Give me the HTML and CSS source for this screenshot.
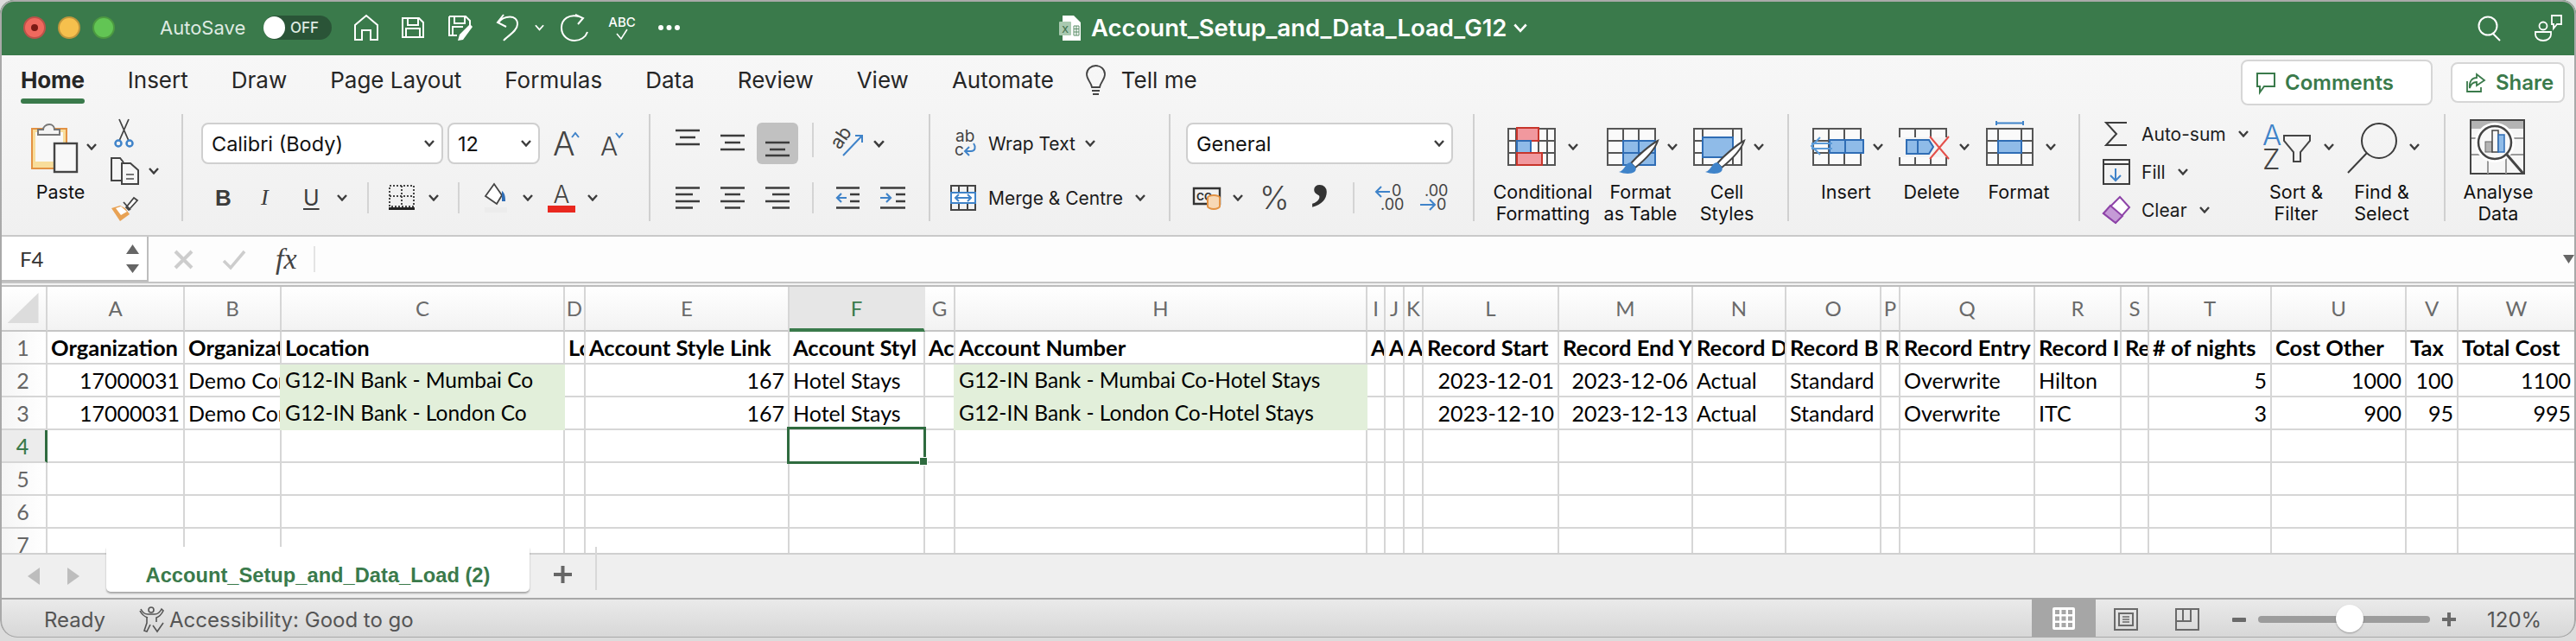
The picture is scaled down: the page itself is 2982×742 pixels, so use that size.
FILE: index.html
```html
<!DOCTYPE html>
<html lang="en">
<head>
<meta charset="utf-8">
<title>Account_Setup_and_Data_Load_G12</title>
<link rel="stylesheet" href="styles.css">
</head>
<body>
<svg class="defs" aria-hidden="true"><symbol id="chev" viewBox="0 0 12 8"><path d="M1 1l5 5.5L11 1" fill="none" stroke="#3c3c3c" stroke-width="2.4"/></symbol><symbol id="chevw" viewBox="0 0 12 8"><path d="M1 1l5 5.5L11 1" fill="none" stroke="#fff" stroke-width="2"/></symbol></svg>
<div class="window">
  <header class="titlebar">
    <span class="light red ml-27"></span><span class="light yellow ml-14"></span><span class="light green ml-14"></span>
    <span class="autosave ml-52">AutoSave</span>
    <span class="toggle ml-21"><span class="knob"></span><span class="off">OFF</span></span>
    <svg class="ml-25" width="30" height="30" viewBox="0 0 30 30"><path d="M2 29V12L15 1l13 11v17h-8V18H10v11z" fill="none" stroke="#fff" stroke-width="2"/></svg>
    <svg class="ml-25" width="28" height="26" viewBox="0 0 28 26"><path d="M2 2h19l5 5v17H2zM8 2v8h12V2M6 24V14h16v10" fill="none" stroke="#fff" stroke-width="2"/></svg>
    <svg class="ml-26" width="30" height="30" viewBox="0 0 30 30"><path d="M2 2h19l5 5v7M2 2v22h9M8 2v8h12V2M6 24V14h12" fill="none" stroke="#fff" stroke-width="2"/><path d="M26 11l3 3-11 15-6 1 2-7z" fill="#fff"/></svg>
    <svg class="ml-26" width="27" height="32" viewBox="0 0 27 32"><path d="M3 10C9 2 25 0 25 12c0 8-12 14-16 19M9 1L2 10l10 5" fill="none" stroke="#fff" stroke-width="2"/></svg>
    <svg class="ml-18" width="11" height="8"><use href="#chevw"/></svg>
    <svg class="ml-19" width="33" height="32" viewBox="0 0 33 32"><path d="M21 3C10 0 1 6 1 16s8 15 15 15c7 0 13-4 15-10M17 1l9 4-6 7" fill="none" stroke="#fff" stroke-width="2"/></svg>
    <svg class="ml-23" width="30" height="28" viewBox="0 0 30 28"><text class="abc" x="15" y="13" text-anchor="middle">ABC</text><path d="M9 21l5 6 7-11" fill="none" stroke="#fff" stroke-width="1.6"/></svg>
    <svg class="ml-26" width="27" height="8" viewBox="0 0 27 8"><circle cx="4" cy="4" r="3" fill="#fff"/><circle cx="13.500" cy="4" r="3" fill="#fff"/><circle cx="23" cy="4" r="3" fill="#fff"/></svg>
    <svg class="ml-438" width="26" height="29" viewBox="0 0 26 29"><path d="M4 0h13l8 8v21H4z" fill="#fff"/><rect y="7" width="14" height="16" rx="1" fill="#a9c9b0"/><text class="xl" x="7" y="20" text-anchor="middle">X</text><path d="M17 12h6v11h-6zM17 15.500h6M17 19h6M20 12v11" fill="none" stroke="#5b8e69" stroke-width="1"/></svg>
    <span class="doc-title ml-11">Account_Setup_and_Data_Load_G12</span>
    <svg class="ml-7" width="16" height="11"><use href="#chevw"/></svg>
    <svg class="push" width="27" height="29" viewBox="0 0 27 29"><circle cx="12" cy="12" r="10.500" fill="none" stroke="#fff" stroke-width="2"/><path d="M18 21l8 8" stroke="#fff" stroke-width="2"/></svg>
    <svg class="ml-39 endpad" width="32" height="32" viewBox="0 0 32 32"><path d="M20 2h11v10h-5l-4 5v-5h-2z" fill="none" stroke="#fff" stroke-width="1.800"/><circle cx="10" cy="14" r="4.500" fill="none" stroke="#fff" stroke-width="1.800"/><path d="M1 21h18v3c0 4-4 7-9 7s-9-3-9-7z" fill="none" stroke="#fff" stroke-width="1.800"/></svg>
  </header>

  <section class="ribbon">
    <nav class="tabs">
      <span class="tab active">Home</span><span class="tab">Insert</span><span class="tab">Draw</span><span class="tab">Page Layout</span><span class="tab">Formulas</span><span class="tab">Data</span><span class="tab">Review</span><span class="tab">View</span><span class="tab">Automate</span>
      <span class="tab tell"><svg width="23" height="38" viewBox="0 0 23 38"><path d="M7 26C6 20 1 17 1 11 1 5 6 1 11.500 1S22 5 22 11c0 6-5 9-6 15z" fill="none" stroke="#444" stroke-width="1.800"/><path d="M7 30h9M8 34h7" stroke="#444" stroke-width="2"/></svg>Tell me</span>
      <button class="btn comments"><svg width="22" height="24" viewBox="0 0 22 24"><path d="M1 1h20v15H9l-5 7v-7H1z" fill="none" stroke="#3a7a4b" stroke-width="2"/></svg>Comments</button>
      <button class="btn share"><svg width="22" height="22" viewBox="0 0 22 22"><path d="M12 1l9 7-9 6v-4C7 10 5 13 4 17 3 10 6 5 12 5zM1 9v12h16v-5" fill="none" stroke="#3a7a4b" stroke-width="1.800"/></svg>Share</button>
    </nav>
    <div class="groups">
      <div class="group g1">
        <div class="big paste-box">
          <div class="big-ic">
            <svg class="ml-12" width="54" height="60" viewBox="0 0 54 60"><rect x="1" y="9" width="40" height="46" fill="#f8dd9b" stroke="#e39243" stroke-width="2"/><rect x="5" y="13" width="32" height="34" fill="#f8f8f8"/><path d="M8 16v-6h6c0-3 3-6 7-6s6 3 6 6h6v6z" fill="#f4f4f4" stroke="#777" stroke-width="2"/><rect x="27" y="26" width="26" height="33" fill="#f8f8f8" stroke="#444" stroke-width="2.400"/></svg>
            <svg class="ml-10" width="12" height="8"><use href="#chev"/></svg>
          </div>
          <span class="lbl">Paste</span>
        </div>
        <div class="clip">
          <svg class="scis" width="32" height="33" viewBox="0 0 32 33"><path d="M10 0l11 25M21 0L10 25" stroke="#444" stroke-width="1.800"/><circle cx="9" cy="28" r="3.500" fill="none" stroke="#3f83c9" stroke-width="2.500"/><circle cx="22" cy="28" r="3.500" fill="none" stroke="#3f83c9" stroke-width="2.500"/></svg>
          <div class="clip-row">
            <svg width="32" height="32" viewBox="0 0 32 32"><path d="M12 27H1V1h10l4 5M13 7h10l9 8v16H13z" fill="#f6f6f6" stroke="#444" stroke-width="2"/><path d="M18 20h9M18 25h9" stroke="#777" stroke-width="1.800"/></svg>
            <svg class="ml-12" width="12" height="8"><use href="#chev"/></svg>
          </div>
          <svg class="brush" width="32" height="30" viewBox="0 0 32 30"><path d="M1 15l10 15 11-8-5-7-6-3z" fill="#e8a254"/><path d="M6 15l6-2 7 6-7 4z" fill="#fff"/><path d="M18 14l9-11 4 3-10 11zM15 8l8 9" fill="#fff" stroke="#444" stroke-width="1.800"/></svg>
        </div>
      </div>

      <div class="group g2">
        <div class="row r1">
          <span class="select font-sel ml-21">Calibri (Body)<svg width="12" height="8"><use href="#chev"/></svg></span>
          <span class="select size-sel ml-5">12<svg width="12" height="8"><use href="#chev"/></svg></span>
          <svg class="ml-15" width="31" height="32" viewBox="0 0 31 32"><text class="bigA" x="0" y="30">A</text><path d="M22 9l4-5 4 5" fill="none" stroke="#3f83c9" stroke-width="2"/></svg>
          <svg class="ml-24" width="27" height="32" viewBox="0 0 27 32"><text class="midA" x="0" y="30">A</text><path d="M18 4l4 5 4-5" fill="none" stroke="#3f83c9" stroke-width="2"/></svg>
        </div>
        <div class="row r2">
          <span class="fmt b ml-37">B</span><span class="fmt i ml-38">I</span><span class="fmt u ml-35">U</span>
          <svg class="ml-22" width="12" height="8"><use href="#chev"/></svg><i class="vsep ml-23"></i>
          <svg class="ml-23" width="30" height="30" viewBox="0 0 30 30"><path d="M1 1h28v24H1zM15 1v24M1 13h28" fill="none" stroke="#444" stroke-width="2" stroke-dasharray="2 2"/><rect y="26" width="30" height="3" fill="#222"/></svg>
          <svg class="ml-16" width="12" height="8"><use href="#chev"/></svg><i class="vsep ml-22"></i>
          <svg class="ml-29" width="26" height="34" viewBox="0 0 26 34"><rect y="28" width="26" height="6" fill="#ececec"/><path d="M1 15L11 1l9 13-6 10z" fill="#fff" stroke="#444" stroke-width="1.800"/><path d="M20 9c3 2 4 6 4 12h-4z" fill="#2f6db5"/></svg>
          <svg class="ml-18" width="12" height="8"><use href="#chev"/></svg>
          <span class="fontcolor ml-17"><span class="fc-a">A</span><i class="fc-bar"></i></span>
          <svg class="ml-14" width="12" height="8"><use href="#chev"/></svg>
        </div>
      </div>

      <div class="group g3">
        <div class="row r1">
          <svg class="ml-29" width="28" height="48" viewBox="0 0 28 48"><path d="M0 9h28M5 17h18M0 25h28" stroke="#3c3c3c" stroke-width="2.600"/></svg>
          <svg class="ml-24" width="28" height="48" viewBox="0 0 28 48"><path d="M0 15h28M5 23h18M0 31h28" stroke="#3c3c3c" stroke-width="2.600"/></svg>
          <span class="selected ml-14"><svg width="28" height="48" viewBox="0 0 28 48"><path d="M0 23h28M5 31h18M0 38h28" stroke="#3c3c3c" stroke-width="2.600"/></svg></span>
          <i class="vsep short ml-16"></i>
          <svg class="ml-24" width="34" height="32" viewBox="0 0 34 32"><text class="orient" x="0" y="0" transform="translate(6 24) rotate(-55)">ab</text><path d="M10 30L32 7M24 7h8v8" fill="none" stroke="#3f83c9" stroke-width="2"/></svg>
          <svg class="ml-11" width="13" height="9"><use href="#chev"/></svg>
        </div>
        <div class="row r2">
          <svg class="ml-29" width="28" height="26" viewBox="0 0 28 26"><path d="M0 1.500h28M0 9h20M0 17h28M0 24.500h20" stroke="#3c3c3c" stroke-width="2.600"/></svg>
          <svg class="ml-24" width="28" height="26" viewBox="0 0 28 26"><path d="M0 1.500h28M5 9h18M0 17h28M5 24.500h18" stroke="#3c3c3c" stroke-width="2.600"/></svg>
          <svg class="ml-24" width="28" height="26" viewBox="0 0 28 26"><path d="M0 1.500h28M8 9h20M0 17h28M8 24.500h20" stroke="#3c3c3c" stroke-width="2.600"/></svg>
          <i class="vsep ml-26"></i>
          <svg class="ml-26" width="27" height="26" viewBox="0 0 27 26"><path d="M0 1.500h27M16 9h11M16 17h11M0 24.500h27" stroke="#3c3c3c" stroke-width="2.600"/><path d="M12 13H1M6 8l-5 5 5 5" fill="none" stroke="#3f83c9" stroke-width="2.200"/></svg>
          <svg class="ml-24" width="29" height="26" viewBox="0 0 29 26"><path d="M0 1.500h29M18 9h11M18 17h11M0 24.500h29" stroke="#3c3c3c" stroke-width="2.600"/><path d="M0 13h11M7 8l5 5-5 5" fill="none" stroke="#3f83c9" stroke-width="2.200"/></svg>
        </div>
      </div>

      <div class="group g4">
        <div class="row r1">
          <svg class="ml-28" width="28" height="32" viewBox="0 0 28 32"><text class="abc2" x="1" y="14">ab</text><text class="abc2" x="0" y="30">c</text><path d="M22 16c3 4 2 9-3 9h-7M17 20l-5 5 5 5" fill="none" stroke="#3f83c9" stroke-width="2"/></svg>
          <span class="txt wrap ml-11">Wrap Text</span><svg class="ml-11" width="12" height="8"><use href="#chev"/></svg>
        </div>
        <div class="row r2">
          <svg class="ml-23" width="30" height="30" viewBox="0 0 30 30"><path d="M1 1h28v28H1zM1 9h28M1 21h28M10 1v8M20 1v8M10 21v8M20 21v8" fill="none" stroke="#444" stroke-width="2"/><rect x="1" y="9" width="28" height="12" fill="#fff" stroke="#3f83c9" stroke-width="2"/><path d="M6 15h18M10 11l-4 4 4 4M20 11l4 4-4 4" fill="none" stroke="#3f83c9" stroke-width="2"/></svg>
          <span class="txt merge ml-14">Merge &amp; Centre</span><svg class="ml-12" width="12" height="8"><use href="#chev"/></svg>
        </div>
      </div>

      <div class="group g5">
        <div class="row r1"><span class="select general-sel ml-18">General<svg width="12" height="8"><use href="#chev"/></svg></span></div>
        <div class="row r2">
          <svg class="ml-26" width="32" height="26" viewBox="0 0 32 26"><path d="M1 2h30v18H1z" fill="none" stroke="#333" stroke-width="2.400"/><text class="acct" x="4" y="16">CC</text><ellipse cx="24" cy="13" rx="7" ry="3" fill="#f7d8b5" stroke="#e39243" stroke-width="2"/><path d="M17 13v10c0 1 3 3 7 3s7-2 7-3V13" fill="#f7d8b5" stroke="#e39243" stroke-width="2"/></svg>
          <svg class="ml-14" width="12" height="8"><use href="#chev"/></svg>
          <span class="pct ml-19">%</span><span class="comma ml-30">,</span><i class="vsep ml-32"></i>
          <svg class="ml-23" width="31" height="30" viewBox="0 0 31 30"><text class="dec" x="20" y="13">0</text><text class="dec" x="7" y="29">.00</text><path d="M18 8H2M8 2L2 8l6 6" fill="none" stroke="#3f83c9" stroke-width="2"/></svg>
          <svg class="ml-21" width="30" height="30" viewBox="0 0 30 30"><text class="dec" x="6" y="13">.00</text><text class="dec" x="20" y="29">0</text><path d="M1 23h16M12 17l6 6-6 6" fill="none" stroke="#3f83c9" stroke-width="2"/></svg>
        </div>
      </div>

      <div class="group g6">
        <div class="big w122">
          <div class="big-ic">
            <svg class="ml-20" width="56" height="64" viewBox="0 0 56 64"><path d="M1 11h54v42H1zM1 25h54M1 39h54M10 11v42M36 11v42M46 11v42" fill="#fafafa" stroke="#555" stroke-width="2"/><rect x="11" y="10" width="25" height="15" fill="#f1989e" stroke="#c8352b" stroke-width="2"/><rect x="11" y="25" width="16" height="14" fill="#8fbbe8" stroke="#2f6db5" stroke-width="2"/><rect x="11" y="39" width="29" height="14" fill="#f1989e" stroke="#c8352b" stroke-width="2"/></svg>
            <svg class="ml-14" width="12" height="8"><use href="#chev"/></svg>
          </div>
          <span class="lbl">Conditional<br>Formatting</span>
        </div>
        <div class="big w104">
          <div class="big-ic">
            <svg class="ml-13" width="60" height="64" viewBox="0 0 60 64"><path d="M1 11h55v42H1zM1 25h55M1 39h55M19 11v42M37 11v42" fill="#fafafa" stroke="#555" stroke-width="2"/><rect x="19" y="25" width="37" height="28" fill="#8fbbe8" stroke="#2f6db5" stroke-width="2"/><path d="M19 39h37M37 25v28" stroke="#2f6db5" stroke-width="2"/><path d="M59 25c-8 4-23 17-31 26l5 5c10-8 22-19 26-31z" fill="#fff" stroke="#444" stroke-width="2"/><path d="M28 50c-7 0-7 10-14 11 10 4 23 2 19-6z" fill="#3f83c9"/></svg>
            <svg class="ml-10" width="12" height="8"><use href="#chev"/></svg>
          </div>
          <span class="lbl">Format<br>as Table</span>
        </div>
        <div class="big w96">
          <div class="big-ic">
            <svg class="ml-9" width="60" height="64" viewBox="0 0 60 64"><path d="M1 11h55v42H1zM1 25h10M1 39h10M11 11v42M46 11v42M11 53h35" fill="#fafafa" stroke="#555" stroke-width="2"/><rect x="11" y="21" width="35" height="23" fill="#8fbbe8" stroke="#2f6db5" stroke-width="2"/><path d="M59 25c-8 4-23 17-31 26l5 5c10-8 22-19 26-31z" fill="#fff" stroke="#444" stroke-width="2"/><path d="M28 50c-7 0-7 10-14 11 10 4 23 2 19-6z" fill="#3f83c9"/></svg>
            <svg class="ml-10" width="12" height="8"><use href="#chev"/></svg>
          </div>
          <span class="lbl">Cell<br>Styles</span>
        </div>
      </div>

      <div class="group g7">
        <div class="big w108">
          <div class="big-ic">
            <svg class="ml-11" width="64" height="64" viewBox="0 0 64 64"><path d="M5 11h55v42H5zM5 25h55M5 39h55M23 11v42M41 11v42" fill="#fafafa" stroke="#555" stroke-width="2"/><rect x="24" y="24" width="39" height="15" fill="#8fbbe8" stroke="#2f6db5" stroke-width="2"/><path d="M42 24v15" stroke="#2f6db5" stroke-width="2"/><path d="M13 21L3 31l10 10M3 28h24M3 34h24" fill="none" stroke="#5b9bd8" stroke-width="2"/></svg>
            <svg class="ml-10" width="12" height="8"><use href="#chev"/></svg>
          </div>
          <span class="lbl">Insert</span>
        </div>
        <div class="big w90">
          <div class="big-ic">
            <svg class="ml-7" width="59" height="64" viewBox="0 0 59 64"><path d="M1 21V11h54v10M1 44v9h54v-9M19 11v10M37 11v10M19 44v9M37 44v9M1 31" fill="#fafafa" stroke="#555" stroke-width="2"/><path d="M9 24h26l5 8-5 8H9z" fill="#8fbbe8" stroke="#2f6db5" stroke-width="2"/><path d="M22 24v16" stroke="#2f6db5" stroke-width="2"/><path d="M36 20l22 26M58 20L36 46" stroke="#e4504a" stroke-width="2"/></svg>
            <svg class="ml-11" width="12" height="8"><use href="#chev"/></svg>
          </div>
          <span class="lbl">Delete</span>
        </div>
        <div class="big w112">
          <div class="big-ic">
            <svg class="ml-18" width="55" height="64" viewBox="0 0 55 64"><path d="M12 2v5M43 2v5M12 4.500h31" fill="none" stroke="#3f83c9" stroke-width="2"/><path d="M1 11h53v42H1zM1 25h53M1 39h53M14 11v42M41 11v42" fill="#fafafa" stroke="#555" stroke-width="2"/><rect x="14" y="25" width="27" height="14" fill="#8fbbe8" stroke="#2f6db5" stroke-width="2"/></svg>
            <svg class="ml-14" width="12" height="8"><use href="#chev"/></svg>
          </div>
          <span class="lbl">Format</span>
        </div>
      </div>

      <div class="group g8">
        <div class="stack">
          <div class="stack-row"><svg width="32" height="30" viewBox="0 0 32 30"><path d="M28 2H4l12 13L4 28h24" fill="none" stroke="#3c3c3c" stroke-width="2"/></svg><span class="txt ml-13">Auto-sum</span><svg class="ml-14" width="12" height="8"><use href="#chev"/></svg></div>
          <div class="stack-row"><svg width="32" height="30" viewBox="0 0 32 30"><path d="M1 1h30v28H1zM1 6h30" fill="none" stroke="#3c3c3c" stroke-width="2"/><path d="M15 11v14M9 19l6 6 6-6" fill="none" stroke="#3f83c9" stroke-width="2"/></svg><span class="txt ml-13">Fill</span><svg class="ml-14" width="12" height="8"><use href="#chev"/></svg></div>
          <div class="stack-row"><svg width="32" height="32" viewBox="0 0 32 32"><path d="M20 1l11 12-16 18L1 20z" fill="#fff" stroke="#8e44a8" stroke-width="2"/><path d="M9 11l14 12-8 8L1 20z" fill="#c59ad6" stroke="#8e44a8" stroke-width="2"/></svg><span class="txt ml-13">Clear</span><svg class="ml-14" width="12" height="8"><use href="#chev"/></svg></div>
        </div>
        <div class="big w96">
          <div class="big-ic">
            <svg class="ml-9" width="56" height="64" viewBox="0 0 56 64"><text class="sortA" x="0" y="30">A</text><text class="sortZ" x="0" y="58">Z</text><path d="M25 19h30v6L44 38v11h-8V38L25 25z" fill="none" stroke="#444" stroke-width="2"/></svg>
            <svg class="ml-15" width="12" height="8"><use href="#chev"/></svg>
          </div>
          <span class="lbl">Sort &amp;<br>Filter</span>
        </div>
        <div class="big w102">
          <div class="big-ic">
            <svg class="ml-11" width="58" height="64" viewBox="0 0 58 64"><circle cx="37" cy="25" r="20" fill="none" stroke="#3c3c3c" stroke-width="2"/><path d="M23 39L1 62" stroke="#3c3c3c" stroke-width="2"/></svg>
            <svg class="ml-14" width="12" height="8"><use href="#chev"/></svg>
          </div>
          <span class="lbl">Find &amp;<br>Select</span>
        </div>
      </div>

      <div class="group g9">
        <div class="big w122">
          <div class="big-ic">
            <svg class="ml-28" width="64" height="64" viewBox="0 0 64 64"><rect x="1" y="1" width="62" height="62" fill="#f6f6f6" stroke="#444" stroke-width="2"/><rect x="2" y="2" width="60" height="9" fill="#b4b4b4"/><path d="M2 22h60M2 41h60M21 41v22M42 41v22" stroke="#999" stroke-width="2"/><circle cx="29" cy="27" r="20" fill="#f8f8f8" stroke="#fff" stroke-width="6"/><circle cx="29" cy="27" r="19" fill="#f8f8f8" stroke="#444" stroke-width="2.500"/><rect x="18" y="26" width="8" height="12" fill="#b4b4b4" stroke="#666"/><rect x="26" y="13" width="7" height="25" fill="#f8f8f8" stroke="#444" stroke-width="1.500"/><rect x="33" y="18" width="7" height="20" fill="#8fbbe8" stroke="#2f6db5" stroke-width="1.500"/><path d="M43 41l19 22" stroke="#444" stroke-width="3"/></svg>
          </div>
          <span class="lbl">Analyse<br>Data</span>
        </div>
      </div>
    </div>
  </section>

  <div class="formula">
    <div class="namebox"><span>F4</span><svg width="15" height="33" viewBox="0 0 15 33"><path d="M7.500 0L15 11H0zM0 23h15L7.500 33z" fill="#666"/></svg></div>
    <svg class="ml-29" width="23" height="21" viewBox="0 0 23 21"><path d="M2 1l19 19M21 1L2 20" stroke="#cdcdcd" stroke-width="4"/></svg>
    <svg class="ml-34" width="26" height="21" viewBox="0 0 26 21"><path d="M1 12l8 8L25 1" fill="none" stroke="#cdcdcd" stroke-width="3.500"/></svg>
    <span class="fx ml-35">fx</span>
    <i class="fsep ml-14"></i>
    <svg class="push farrow" width="13" height="10" viewBox="0 0 13 10"><path d="M0 0h13L6.500 10z" fill="#666"/></svg>
  </div>

  <div class="sheet">
    <div class="sheet-row head">
      <div class="corner"><i></i></div><div>A</div><div>B</div><div>C</div><div>D</div><div>E</div><div class="cur">F</div><div>G</div><div>H</div><div>I</div><div>J</div><div>K</div><div>L</div><div>M</div><div>N</div><div>O</div><div>P</div><div>Q</div><div>R</div><div>S</div><div>T</div><div>U</div><div>V</div><div>W</div>
    </div>
    <div class="sheet-row bold">
      <div class="rh">1</div><div>Organization</div><div>Organizat</div><div>Location</div><div>Lo</div><div>Account Style Link</div><div>Account Styl</div><div>Ac</div><div>Account Number</div><div>A</div><div>A</div><div>A</div><div>Record Start</div><div>Record End Y</div><div>Record D</div><div>Record B</div><div>R</div><div>Record Entry</div><div>Record I</div><div>Re</div><div># of nights</div><div>Cost Other</div><div>Tax</div><div>Total Cost</div>
    </div>
    <div class="sheet-row">
      <div class="rh">2</div><div class="n">17000031</div><div>Demo Cor</div><div class="fill top">G12-IN Bank - Mumbai Co</div><div></div><div class="n">167</div><div>Hotel Stays</div><div></div><div class="fill top">G12-IN Bank - Mumbai Co-Hotel Stays</div><div></div><div></div><div></div><div class="n">2023-12-01</div><div class="n">2023-12-06</div><div>Actual</div><div>Standard</div><div></div><div>Overwrite</div><div>Hilton</div><div></div><div class="n">5</div><div class="n">1000</div><div class="n">100</div><div class="n">1100</div>
    </div>
    <div class="sheet-row">
      <div class="rh">3</div><div class="n">17000031</div><div>Demo Cor</div><div class="fill">G12-IN Bank - London Co</div><div></div><div class="n">167</div><div>Hotel Stays</div><div></div><div class="fill">G12-IN Bank - London Co-Hotel Stays</div><div></div><div></div><div></div><div class="n">2023-12-10</div><div class="n">2023-12-13</div><div>Actual</div><div>Standard</div><div></div><div>Overwrite</div><div>ITC</div><div></div><div class="n">3</div><div class="n">900</div><div class="n">95</div><div class="n">995</div>
    </div>
    <div class="sheet-row">
      <div class="rh cur-row">4</div><div></div><div></div><div></div><div></div><div></div><div class="sel"></div><div></div><div></div><div></div><div></div><div></div><div></div><div></div><div></div><div></div><div></div><div></div><div></div><div></div><div></div><div></div><div></div><div></div>
    </div>
    <div class="sheet-row">
      <div class="rh">5</div><div></div><div></div><div></div><div></div><div></div><div></div><div></div><div></div><div></div><div></div><div></div><div></div><div></div><div></div><div></div><div></div><div></div><div></div><div></div><div></div><div></div><div></div><div></div>
    </div>
    <div class="sheet-row">
      <div class="rh">6</div><div></div><div></div><div></div><div></div><div></div><div></div><div></div><div></div><div></div><div></div><div></div><div></div><div></div><div></div><div></div><div></div><div></div><div></div><div></div><div></div><div></div><div></div><div></div>
    </div>
    <div class="sheet-row">
      <div class="rh">7</div><div></div><div></div><div></div><div></div><div></div><div></div><div></div><div></div><div></div><div></div><div></div><div></div><div></div><div></div><div></div><div></div><div></div><div></div><div></div><div></div><div></div><div></div><div></div>
    </div>
  </div>

  <div class="tabstrip">
    <svg class="ml-32 nav" width="14" height="20" viewBox="0 0 14 20"><path d="M14 0v20L0 10z" fill="#bdbdbd"/></svg>
    <svg class="ml-32 nav" width="14" height="20" viewBox="0 0 14 20"><path d="M0 0v20l14-10z" fill="#bdbdbd"/></svg>
    <div class="sheet-tab ml-31">Account_Setup_and_Data_Load (2)</div>
    <svg class="ml-28 plus" width="21" height="20" viewBox="0 0 21 20"><path d="M8.500 0h4v8H21v4h-8.500v8h-4v-8H0V8h8.500z" fill="#666"/></svg>
    <i class="tsep ml-27"></i>
  </div>

  <footer class="status">
    <span class="st ready ml-51">Ready</span>
    <svg class="ml-40" width="31" height="30" viewBox="0 0 31 30"><circle cx="15" cy="4" r="3" fill="none" stroke="#555" stroke-width="1.600"/><path d="M3 3c2 4 5 6 8 6h8c3 0 6-2 8-6l2 2c-2 4-5 7-8 8v5M11 13C8 12 4 9 2 5M10 13v6l-3 9 3 1 4-8" fill="none" stroke="#555" stroke-width="1.600"/><path d="M17 22l5 7 7-10" fill="none" stroke="#555" stroke-width="1.600"/></svg>
    <span class="st ml-5">Accessibility: Good to go</span>
    <span class="viewbtn"><svg width="26" height="26" viewBox="0 0 26 26"><rect width="26" height="26" rx="2" fill="#fff"/><path d="M3 3h5v5H3zM10.500 3h5v5h-5zM18 3h5v5h-5zM3 10.500h5v5H3zM10.500 10.500h5v5h-5zM18 10.500h5v5h-5zM3 18h5v5H3zM10.500 18h5v5h-5zM18 18h5v5h-5z" fill="#a6a6a6"/></svg></span>
    <svg class="ml-21" width="28" height="26" viewBox="0 0 28 26"><path d="M1 1h26v24H1zM6 6h16v14H6z" fill="none" stroke="#6a6a6a" stroke-width="2"/><path d="M10 10h8M10 13h8M10 16h8" stroke="#6a6a6a" stroke-width="1.600"/></svg>
    <svg class="ml-43" width="28" height="26" viewBox="0 0 28 26"><path d="M1 1h26v24H1zM1 15h17V1M9 1v14" fill="none" stroke="#6a6a6a" stroke-width="2"/></svg>
    <i class="minus ml-38"></i>
    <span class="slider ml-14"><i class="thumb"></i></span>
    <svg class="ml-14" width="16" height="16" viewBox="0 0 16 16"><path d="M6 0h4v6h6v4h-6v6H6v-6H0V6h6z" fill="#6a6a6a"/></svg>
    <span class="st zoomval ml-36">120%</span>
  </footer>
</div>
</body>
</html>
```
FILE: styles.css
```css
* { box-sizing: border-box; }
html, body { margin: 0; padding: 0; }
body { width: 2982px; height: 742px; overflow: hidden; background: #dcdcdc; font-family: Inter, "Liberation Sans", sans-serif; }
.defs { display: none; }
svg { display: block; flex: none; overflow: visible; }
i { display: block; font-style: normal; }

.ml-5 { margin-left: 5px; } .ml-7 { margin-left: 7px; } .ml-9 { margin-left: 9px; } .ml-10 { margin-left: 10px; }
.ml-11 { margin-left: 11px; } .ml-12 { margin-left: 12px; } .ml-13 { margin-left: 13px; } .ml-14 { margin-left: 14px; }
.ml-15 { margin-left: 15px; } .ml-16 { margin-left: 16px; } .ml-17 { margin-left: 17px; } .ml-18 { margin-left: 18px; }
.ml-19 { margin-left: 19px; } .ml-20 { margin-left: 20px; } .ml-21 { margin-left: 21px; } .ml-22 { margin-left: 22px; }
.ml-23 { margin-left: 23px; } .ml-24 { margin-left: 24px; } .ml-25 { margin-left: 25px; } .ml-26 { margin-left: 26px; }
.ml-27 { margin-left: 27px; } .ml-28 { margin-left: 28px; } .ml-29 { margin-left: 29px; } .ml-30 { margin-left: 30px; }
.ml-31 { margin-left: 31px; } .ml-32 { margin-left: 32px; } .ml-34 { margin-left: 34px; } .ml-35 { margin-left: 35px; }
.ml-36 { margin-left: 36px; } .ml-37 { margin-left: 37px; } .ml-38 { margin-left: 38px; } .ml-39 { margin-left: 39px; }
.ml-40 { margin-left: 40px; } .ml-43 { margin-left: 43px; } .ml-51 { margin-left: 51px; } .ml-52 { margin-left: 52px; }
.ml-438 { margin-left: 438px; }
.push { margin-left: auto; }

.window { position: relative; width: 2982px; height: 738px; display: flex; flex-direction: column; overflow: hidden; border-radius: 16px 16px 20px 20px; background: #f2f2f2; }
.window::after { content: ""; position: absolute; inset: 0; border: 2px solid #a9a9a9; border-bottom-width: 1px; border-radius: 16px 16px 20px 20px; pointer-events: none; z-index: 5; }

/* title bar */
.titlebar { height: 64px; flex: none; display: flex; align-items: center; background: #3a7a4b; color: #fff; }
.light { width: 26px; height: 26px; border-radius: 50%; flex: none; border: 2px solid rgba(0,0,0,.22); }
.light.red { background: #f0695e; position: relative; }
.light.red::after { content: ""; position: absolute; left: 7px; top: 7px; width: 8px; height: 8px; border-radius: 50%; background: #7c1a14; }
.light.yellow { background: #f6c04d; }
.light.green { background: #62c554; }
.autosave { width: 99px; font-size: 22px; color: #dfeae2; white-space: nowrap; }
.toggle { width: 79px; height: 28px; border-radius: 14px; background: #2a5437; display: flex; align-items: center; flex: none; }
.knob { width: 25px; height: 26px; border-radius: 50%; background: #fff; flex: none; }
.off { margin-left: 6px; font-size: 17px; font-weight: 500; color: #dfeae2; }
.abc { font: 500 15px Inter, sans-serif; fill: #fff; }
.xl { font: 500 11px Inter, sans-serif; fill: #44734f; }
.doc-title { width: 482px; font-size: 27.500px; font-weight: 600; white-space: nowrap; }
.endpad { margin-right: 16px; }

/* ribbon */
.ribbon { height: 210px; flex: none; border-bottom: 2px solid #c9c9c9; background: linear-gradient(#f7f7f7, #f0f0f0); }
.tabs { height: 68px; display: flex; padding-left: 24px; gap: 50px; color: #262626; font-size: 26px; }
.tab { display: block; padding-top: 14px; line-height: 30px; white-space: nowrap; }
.tab.active { font-weight: 700; letter-spacing: -.2px; }
.tab.active::after { content: ""; display: block; height: 6px; margin-top: 6px; border-radius: 3px; background: #3a7a4b; }
.tab.tell { display: flex; align-items: flex-start; gap: 18px; margin-left: -13px; }
.tab.tell svg { margin-top: -3px; }
.btn { display: flex; align-items: center; font: 600 24px Inter, sans-serif; color: #3a7a4b; background: #fff; border: 2px solid #d6d6d6; border-radius: 8px; padding: 0; }
.comments { width: 222px; height: 53px; margin: 5px 0 0 auto; padding-left: 16px; gap: 11px; }
.share { width: 132px; height: 47px; margin: 8px 13px 0 -29px; padding-left: 16px; gap: 12px; }

.groups { height: 124px; display: flex; }
.group { height: 124px; flex: none; border-right: 2px solid #d0d0d0; }
.g1 { width: 212px; display: flex; }
.g2 { width: 541px; } .g3 { width: 324px; } .g4 { width: 278px; } .g5 { width: 352px; }
.g6 { width: 364px; display: flex; padding-left: 18px; }
.g7 { width: 337px; display: flex; padding-left: 12px; }
.g8 { width: 423px; display: flex; padding-left: 26px; }
.g9 { flex: 1; border-right: 0; }

.row { display: flex; align-items: center; }
.r1 { height: 48px; margin-top: 10px; }
.r2 { height: 40px; margin-top: 19px; }
.select { display: flex; align-items: center; justify-content: space-between; height: 48px; flex: none; background: #fff; border: 2px solid #cfcfcf; border-radius: 8px; padding: 0 8px 0 10px; font-size: 23.500px; color: #111; white-space: nowrap; }
.font-sel { width: 280px; } .size-sel { width: 107px; } .general-sel { width: 309px; }
.bigA { font: 300 38px Inter, sans-serif; fill: #444; }
.midA { font: 300 30px Inter, sans-serif; fill: #444; }
.fmt { display: block; flex: none; color: #3c3c3c; line-height: 30px; }
.b { width: 15px; font: 700 26px "Liberation Sans", sans-serif; }
.i { width: 14px; font: italic 400 26px "Liberation Serif", serif; }
.u { width: 17px; font: 400 25px Inter, sans-serif; text-decoration: underline; text-underline-offset: 3px; text-decoration-thickness: 2px; }
.vsep { width: 2px; height: 36px; flex: none; background: #d4d4d4; }
.vsep.short { height: 40px; margin-top: -8px; }
.fontcolor { width: 32px; flex: none; display: flex; flex-direction: column; align-items: center; }
.fc-a { font: 300 28px/24px Inter, sans-serif; color: #444; }
.fc-bar { width: 32px; height: 8px; margin-top: 1px; background: #e9281f; }
.selected { display: block; width: 48px; height: 48px; flex: none; padding-left: 10px; border-radius: 6px; background: #c1c1c1; }
.orient { font: 400 22px Inter, sans-serif; fill: #444; }
.abc2 { font: 400 19px Inter, sans-serif; fill: #444; }
.txt { font-size: 21px; color: #1c1c1c; white-space: nowrap; }
.wrap { width: 101px; } .merge { width: 158px; }
.acct { font: 700 12px Inter, sans-serif; fill: #333; }
.pct { width: 30px; flex: none; font: 300 37px/40px Inter, sans-serif; color: #444; }
.comma { width: 16px; flex: none; font: 700 84px/40px "Liberation Serif", serif; color: #333; position: relative; top: -31px; }
.dec { font: 400 18px Inter, sans-serif; fill: #444; }

.big { flex: none; display: flex; flex-direction: column; align-items: center; }
.big-ic { width: 100%; height: 64px; margin-top: 6px; display: flex; align-items: center; }
.lbl { margin-top: 8px; font-size: 21.500px; line-height: 25px; text-align: center; color: #111; white-space: nowrap; }
.paste-box { width: 92px; margin-left: 24px; }
.w122 { width: 122px; } .w104 { width: 104px; } .w96 { width: 96px; } .w108 { width: 108px; } .w90 { width: 90px; } .w112 { width: 112px; } .w102 { width: 102px; }
.clip { margin-left: 12px; padding-top: 6px; }
.clip-row { display: flex; align-items: center; margin-top: 11px; }
.brush { margin-top: 12px; }
.stack { width: 176px; flex: none; padding-top: 1px; }
.stack-row { height: 44px; display: flex; align-items: center; }
.sortA { font: 300 33px Inter, sans-serif; fill: #3f83c9; }
.sortZ { font: 300 33px Inter, sans-serif; fill: #444; }

/* formula bar */
.formula { height: 54px; flex: none; display: flex; align-items: center; background: #fdfdfd; border-bottom: 2px solid #c4c4c4; }
.namebox { width: 172px; height: 52px; flex: none; display: flex; align-items: center; justify-content: space-between; padding: 0 9px 0 23px; background: #fff; border: 2px solid #bdbdbd; border-left: 0; border-top: 0; font: 400 24px Lato, sans-serif; color: #333; }
.fx { font: italic 400 34px/40px "Liberation Serif", serif; color: #444; width: 30px; }
.fsep { width: 2px; height: 30px; background: #e4e4e4; }
.farrow { margin-right: 2px; }

/* sheet */
.sheet { height: 310px; flex: none; overflow: hidden; background: #fff; border-top: 2px solid #bdbdbd; margin-top: 2px; }
.sheet-row { display: grid; height: 38px; grid-template-columns: 55px 159px 112px 328px 24px 236px 157px 35px 477px 21px 22px 22px 157px 155px 108px 110px 22px 156px 100px 32px 142px 156px 60px 136px; font: 400 25px/36px Lato, sans-serif; color: #000; }
.sheet-row > div { position: relative; overflow: hidden; white-space: nowrap; padding: 0 0 0 4px; border-right: 2px solid #d6d6d6; border-bottom: 2px solid #d6d6d6; }
.sheet-row.bold { font-weight: 700; font-size: 25.500px; }
.sheet-row .n { text-align: right; padding: 0 4px 0 0; }
.sheet-row > .fill { background: #e2efda; border-right-color: #e2efda; border-bottom-color: #e2efda; margin-left: -2px; padding-left: 6px; font-size: 24.500px; }
.sheet-row > .rh { padding: 0; text-align: center; color: #666; background: linear-gradient(90deg, #f5f5f5, #fff); font-size: 25px; font-weight: 400; }
.sheet-row.head { height: 52px; line-height: 50px; color: #6a6a6a; font-size: 24px; background: linear-gradient(#fff, #f2f2f2); }
.sheet-row.head > div { padding: 0; text-align: center; border-bottom: 2px solid #c6c6c6; }
.sheet-row.head > .cur { color: #3a7a4b; background: #e6e6e6; border-bottom: 4px solid #3a7a4b; border-right-color: #e6e6e6; }
.corner { display: flex; align-items: center; justify-content: center; }
.corner i { width: 36px; height: 35px; margin-top: -1px; background: #dcdcdc; clip-path: polygon(100% 0, 100% 100%, 0 100%); }
.sheet-row > .cur-row { color: #3a7a4b; font-weight: 500; background: #ececec; border-right: 3px solid #2f6b3f; }
.sheet-row > .sel { overflow: visible; z-index: 2; }
.sel::after { content: ""; position: absolute; left: -3px; top: -4px; right: -3px; bottom: -3px; border: 3px solid #2f6b3f; }
.sel::before { content: ""; position: absolute; right: -5px; bottom: -5px; width: 8px; height: 8px; background: #2f6b3f; border: 1px solid #fff; z-index: 1; }

/* sheet tabs */
.tabstrip { height: 52px; flex: none; display: flex; align-items: flex-start; background: #efefef; border-top: 2px solid #d0d0d0; position: relative; z-index: 3; }
.nav { margin-top: 15px; }
.sheet-tab { width: 490px; height: 52px; margin-top: -9px; text-align: center; font: 700 23.700px/66px "Liberation Sans", sans-serif; color: #3a7a4b; background: #fff; border-radius: 0 0 5px 5px; box-shadow: 0 2px 2px rgba(0,0,0,.3); white-space: nowrap; }
.plus { margin-top: 13px; }
.tsep { width: 2px; height: 50px; margin-top: -9px; background: #d8d8d8; }

/* status bar */
.status { flex: 1; display: flex; align-items: center; background: linear-gradient(#eaeaea, #d6d6d6); border-top: 2px solid #a8a8a8; }
.st { font: 400 24px Inter, sans-serif; color: #555; white-space: nowrap; }
.ready { width: 69px; }
.viewbtn { width: 74px; height: 48px; margin: -2px 0 0 auto; flex: none; display: flex; align-items: center; justify-content: center; background: #a6a6a6; }
.minus { width: 16px; height: 5px; flex: none; border-radius: 1px; background: #6a6a6a; }
.slider { position: relative; width: 199px; height: 8px; flex: none; border-radius: 4px; background: #9c9c9c; }
.thumb { position: absolute; left: 90px; top: -13px; width: 32px; height: 32px; border-radius: 50%; background: #fff; box-shadow: 0 1px 2px rgba(0,0,0,.3); }
.zoomval { width: 62px; margin-right: 41px; }
```
